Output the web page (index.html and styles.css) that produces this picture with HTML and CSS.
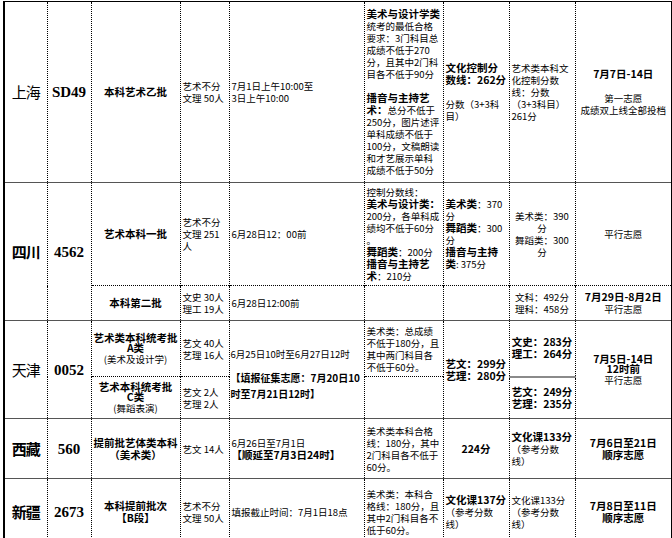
FILE: index.html
```html
<!DOCTYPE html>
<html lang="zh-CN">
<head>
<meta charset="utf-8">
<title>艺术类招生计划</title>
<link rel="stylesheet" href="styles.css">
</head>
<body>
<table class="plan">
<colgroup>
<col class="c-prov"><col class="c-code"><col class="c-batch"><col class="c-num"><col class="c-time"><col class="c-req"><col class="c-cul"><col class="c-ctl"><col class="c-vol">
</colgroup>
<tbody>
<tr class="top h-sh">
<td class="prov">上海</td>
<td class="code">SD49</td>
<td class="batch"><b>本科艺术乙批</b></td>
<td class="num">艺术不分<br>文理 50人</td>
<td class="time">7月1日上午10:00至<br>3日上午10:00</td>
<td class="txt"><b>美术与设计学类</b><br>统考的最低合格<br>要求：3门科目总<br>成绩不低于270<br>分，且其中2门科<br>目各不低于90分<br><br><b>播音与主持艺<br>术：</b>总分不低于<br>250分，图片述评<br>单科成绩不低于<br>100分，文稿朗读<br>和才艺展示单科<br>成绩不低于50分</td>
<td class="txt"><b>文化控制分<br>数线：262分</b><br><br>分数（3+3科<br>目）</td>
<td class="txt">艺术类本科文<br>化控制分数<br>线：分数<br>（3+3科目）<br>261分</td>
<td class="ctr"><b>7月7日-14日</b><br><br>第一志愿<br>成绩双上线全部投档</td>
</tr>
<tr class="first h-sc1">
<td class="prov bold" rowspan="2">四川</td>
<td class="code" rowspan="2">4562</td>
<td class="batch"><b>艺术本科一批</b></td>
<td class="num">艺术不分<br>文理 251<br>人</td>
<td class="time">6月28日12：00前</td>
<td class="txt">控制分数线：<br><b>美术与设计类：</b><br>200分，各单科成<br>绩均不低于60分<br>。<br><b>舞蹈类</b>：200分<br><b>播音与主持艺<br>术</b>：210分</td>
<td class="txt"><b>美术类</b>：370<br>分<br><b>舞蹈类</b>：300<br>分<br><b>播音与主持<br>类</b>: 375分</td>
<td class="ctr">美术类：390<br>分<br>舞蹈类：300<br>分</td>
<td class="ctr">平行志愿</td>
</tr>
<tr class="sub h-sc2">
<td class="batch"><b>本科第二批</b></td>
<td class="num">文史 30人<br>理工 19人</td>
<td class="time">6月28日12:00前</td>
<td></td>
<td></td>
<td class="ctr">文科：492分<br>理科：458分</td>
<td class="ctr"><b>7月29日-8月2日</b><br>平行志愿</td>
</tr>
<tr class="first h-tj1">
<td class="prov" rowspan="2">天津</td>
<td class="code" rowspan="2">0052</td>
<td class="batch tight"><b>艺术类本科统考批<br>A类</b><br>(美术及设计学)</td>
<td class="num">艺文 40人<br>艺理 16人</td>
<td class="time drop" rowspan="2"><div class="line1">6月25日10时至6月27日12时</div><div class="gap"><b>【填报征集志愿：7月20日10<br>时至7月21日12时】</b></div></td>
<td class="txt">美术类：总成绩<br>不低于180分，且<br>其中两门科目各<br>不低于60分。</td>
<td class="txt" rowspan="2"><b>艺文：299分<br>艺理：280分</b></td>
<td class="ctr"><b>文史：283分<br>理工：264分</b></td>
<td class="ctr tight" rowspan="2"><b>7月5日-14日<br>12时前</b><br>平行志愿</td>
</tr>
<tr class="sub h-tj2">
<td class="batch tight"><b>艺术本科统考批<br>C类</b><br>(舞蹈表演)</td>
<td class="num">艺文 2人<br>艺理 2人</td>
<td></td>
<td class="ctr solid-top"><b>艺文：249分<br>艺理：235分</b></td>
</tr>
<tr class="first h-xz">
<td class="prov bold">西藏</td>
<td class="code">560</td>
<td class="batch"><b>提前批艺体类本科<br>（美术类）</b></td>
<td class="num">艺文 14人</td>
<td class="time">6月26日至7月1日<br><b>【顺延至7月3日24时】</b></td>
<td class="txt">美术类本科合格<br>线：180分，其中<br>2门科目各不低于<br>60分。</td>
<td class="ctr"><b>224分</b></td>
<td class="txt"><b>文化课133分</b><br>（参考分数<br>线）</td>
<td class="ctr"><b>7月6日至21日<br>顺序志愿</b></td>
</tr>
<tr class="first h-xj">
<td class="prov bold">新疆</td>
<td class="code">2673</td>
<td class="batch"><b>本科提前批次<br>【B段】</b></td>
<td class="num">艺术不分<br>文理 50人</td>
<td class="time">填报截止时间：7月1日18点</td>
<td class="txt">美术类：本科合<br>格线：180分，且<br>其中2门科目各不<br>低于60分。</td>
<td class="txt"><b>文化课137分</b><br>（参考分数<br>线）</td>
<td class="txt">文化课133分<br>（参考分数<br>线）</td>
<td class="ctr"><b>7月8日至11日<br>顺序志愿</b></td>
</tr>
</tbody>
</table>
</body>
</html>
```

FILE: styles.css
```css
* { box-sizing: border-box; }
html, body { margin: 0; padding: 0; background: #fff; }
body {
  font-family: "Noto Sans CJK SC", "Noto Sans", sans-serif;
  font-size: 9.5px;
  line-height: 12px;
  color: #000;
  overflow: hidden;
}
.plan {
  border-collapse: collapse;
  table-layout: fixed;
  width: 668px;
  margin: 1px 0 0 3px;
  border-left: 2px solid #000;
  border-right: 2px solid #000;
}
.c-prov { width: 43px; }
.c-code { width: 44px; }
.c-batch { width: 89px; }
.c-num { width: 49px; }
.c-time { width: 135px; }
.c-req { width: 79px; }
.c-cul { width: 66px; }
.c-ctl { width: 66px; }
.c-vol { width: 97px; }

.plan td {
  border-left: 1px dotted #000;
  border-right: 1px dotted #000;
  padding: 0 2px;
  vertical-align: middle;
  white-space: nowrap;
  overflow: hidden;
}
.plan tr.top td { border-top: 1px solid #000; }
.plan tr.first td { border-top: 1px solid #555; }
.plan tr.sub td { border-top: 1px dotted #000; }
.plan tr.sub td.solid-top { border-top: 2px solid #8a8a8a; }

.h-sh { height: 181px; }
.h-sc1 { height: 103px; }
.h-sc2 { height: 35px; }
.h-tj1 { height: 56px; }
.h-tj2 { height: 42px; }
.h-xz { height: 60px; }
.h-xj { height: 66px; }

b { font-weight: bold; font-size: 10.5px; }

.prov {
  font-size: 15px;
  text-align: center;
  letter-spacing: -1px;
}
.bold { font-weight: bold; }
.code {
  font-family: "Liberation Serif", serif;
  font-size: 15px;
  font-weight: bold;
  text-align: center;
}
.batch { text-align: center; }
.num { padding-left: 3px; }
.time { padding-left: 2px; }
.txt { padding-left: 2px; }
.ctr { text-align: center; }
.tight { line-height: 10.5px; }

.plan td.drop { padding-top: 9px; padding-left: 1px; }
.line1 { line-height: 14px; }
.gap { margin-top: 9px; line-height: 16px; }
.gap b { font-size: 10px; }
```
